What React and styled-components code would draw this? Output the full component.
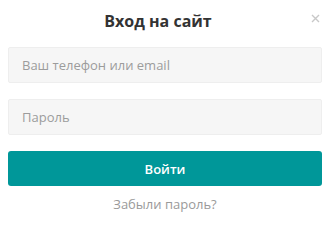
import React from "react";
import styled, { createGlobalStyle } from "styled-components";

const Global = createGlobalStyle`
  html, body { margin: 0; padding: 0; background: #fff; }
  body { font-family: "Open Sans", "Liberation Sans", sans-serif; }
  * { box-sizing: border-box; }
`;

const Modal = styled.div`
  width: 333px;
  padding: 0 11px 0 8px;
  display: flex;
  flex-direction: column;
  position: relative;
`;

const Title = styled.h2`
  margin: 0 0 6px;
  height: 41px;
  display: flex;
  align-items: center;
  justify-content: center;
  font-size: 16px;
  font-weight: 700;
  color: #333;
  padding-right: 14px;
`;

const Close = styled.button`
  position: absolute;
  top: 11px;
  right: 11px;
  width: 14px;
  height: 14px;
  padding: 0;
  border: none;
  background: none;
  display: flex;
  align-items: center;
  justify-content: center;
  cursor: pointer;
`;

const Form = styled.form`
  display: flex;
  flex-direction: column;
  gap: 16px;
`;

const Input = styled.input`
  height: 36px;
  width: 100%;
  background: #f6f6f6;
  border: 1px solid #eeeeee;
  border-radius: 2px;
  padding: 0 13px;
  font-family: "Open Sans", "Liberation Sans", sans-serif;
  font-size: 13px;
  color: #333;
  outline: none;
  &::placeholder { color: #9c9c9c; }
`;

const Submit = styled.button`
  height: 35px;
  width: 100%;
  border: none;
  border-radius: 3px;
  background: #009799;
  color: #fff;
  font-family: "Open Sans", "Liberation Sans", sans-serif;
  font-size: 13px;
  font-weight: 600;
  cursor: pointer;
`;

const Forgot = styled.a`
  align-self: center;
  margin-top: 9px;
  font-size: 13px;
  color: #9a9a9a;
  text-decoration: none;
`;

export default function App() {
  return (
    <>
      <Global />
      <Modal>
        <Title>Вход на сайт</Title>
        <Close aria-label="close">
          <svg width="9" height="9" viewBox="0 0 9 9">
            <path d="M1 1L8 8M8 1L1 8" stroke="#c8c8c8" strokeWidth="1.4" />
          </svg>
        </Close>
        <Form onSubmit={(e) => e.preventDefault()}>
          <Input placeholder="Ваш телефон или email" />
          <Input type="password" placeholder="Пароль" />
          <Submit type="submit">Войти</Submit>
        </Form>
        <Forgot href="#">Забыли пароль?</Forgot>
      </Modal>
    </>
  );
}
